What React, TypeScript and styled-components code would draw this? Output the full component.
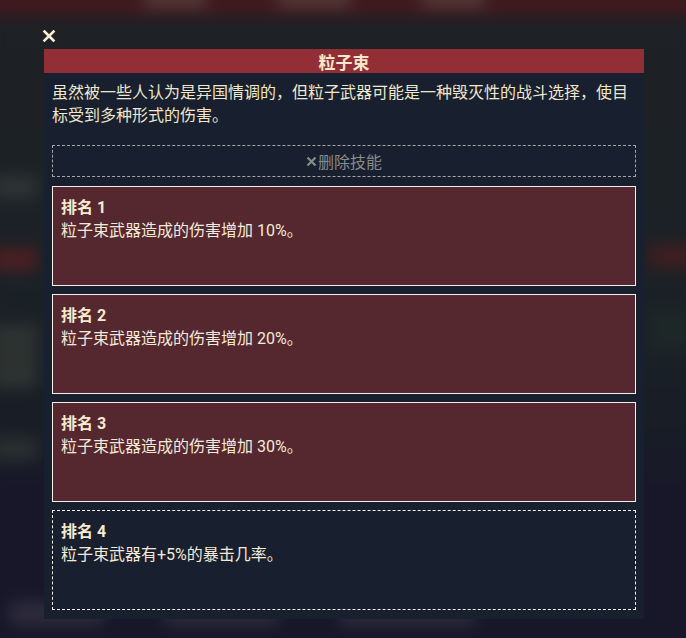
import styled, { createGlobalStyle } from "styled-components";

const GlobalStyle = createGlobalStyle`
  html, body {
    margin: 0;
    padding: 0;
    background: #1c2126;
  }
  body {
    font-family: Roboto, "Noto Sans CJK SC", sans-serif;
  }
`;

interface IRank {
  rank: number;
  text: string;
  unlocked: boolean;
}

const ranks: IRank[] = [
  { rank: 1, text: "粒子束武器造成的伤害增加 10%。", unlocked: true },
  { rank: 2, text: "粒子束武器造成的伤害增加 20%。", unlocked: true },
  { rank: 3, text: "粒子束武器造成的伤害增加 30%。", unlocked: true },
  { rank: 4, text: "粒子束武器有+5%的暴击几率。", unlocked: false },
];

const StyledScreen = styled.div`
  position: relative;
  width: 686px;
  height: 638px;
  overflow: hidden;
`;

// blurred game view sitting behind the dialog
const StyledBackdrop = styled.div`
  height: 100%;
  display: flex;
  flex-direction: column;
  filter: blur(7px);
  transform: scale(1.03);
`;

const StyledTopBar = styled.div`
  height: 30px;
  display: flex;
  gap: 70px;
  padding: 0 150px;
  background: linear-gradient(#43191d 60%, #1e2126);
`;

const StyledTopBlob = styled.div<{ $w: number }>`
  width: ${({ $w }) => $w}px;
  background: #5a3b39;
  margin: 0 0 14px;
`;

const StyledMiddle = styled.div`
  flex: 1;
  display: flex;
  justify-content: space-between;
  background: linear-gradient(#1e2126, #1a2126 70%, #181a27);
`;

const StyledSide = styled.div`
  width: 46px;
  display: flex;
  flex-direction: column;
  padding-top: 120px;
`;

const StyledSideBlob = styled.div<{ $h: number; $mt: number; $c: string }>`
  height: ${({ $h }) => $h}px;
  margin-top: ${({ $mt }) => $mt}px;
  background: ${({ $c }) => $c};
`;

const StyledBottom = styled.div`
  height: 140px;
  display: flex;
  align-items: flex-end;
  gap: 60px;
  padding: 0 20px 22px;
  background: #18172a;
`;

const StyledBottomBlob = styled.div<{ $w: number }>`
  width: ${({ $w }) => $w}px;
  height: 22px;
  background: #2e2c3a;
`;

const StyledOverlay = styled.div`
  position: absolute;
  top: 29px;
  left: 42px;
  width: 602px;
  display: flex;
  flex-direction: column;
`;

const StyledClose = styled.button`
  width: 14px;
  height: 14px;
  padding: 0;
  margin-bottom: 6px;
  border: none;
  background: none;
  display: flex;
  cursor: pointer;
`;

const StyledPanel = styled.div`
  margin-left: 2px;
  width: 600px;
  height: 570px;
  background: #181f2e;
  box-sizing: border-box;
  padding-bottom: 9px;
  display: flex;
  flex-direction: column;
`;

const StyledHeader = styled.div`
  height: 24px;
  background: #922e35;
  color: #f7e8cb;
  font-weight: 700;
  font-size: 17px;
  display: flex;
  align-items: center;
  justify-content: center;
`;

const StyledDescription = styled.p`
  margin: 0;
  padding: 8px 8px 18px;
  color: #f1e7cd;
  font-size: 16px;
  line-height: 23px;
`;

const StyledRemove = styled.button`
  margin: 0 8px;
  height: 34px;
  border: 1px dashed #a6a6a6;
  background: none;
  color: #8a8a8a;
  font-family: inherit;
  font-size: 16px;
  display: flex;
  align-items: center;
  justify-content: center;
  gap: 1px;
  cursor: pointer;
`;

const StyledRankList = styled.div`
  margin-top: 9px;
  padding: 0 8px;
  display: flex;
  flex-direction: column;
  gap: 8px;
`;

const StyledRank = styled.div<{ $unlocked: boolean }>`
  height: 100px;
  box-sizing: border-box;
  padding: 9px 8px;
  border: 1px ${({ $unlocked }) => ($unlocked ? "solid" : "dashed")} #f4f0e8;
  background: ${({ $unlocked }) => ($unlocked ? "#55272f" : "#181f2e")};
  color: #f3eada;
  font-size: 16px;
  line-height: 23px;
`;

const StyledRankTitle = styled.div`
  font-weight: 700;
  font-size: 16px;
  color: #f6ead0;
`;

const sideLeft = [
  { h: 22, mt: 30, c: "#2f3333" },
  { h: 22, mt: 48, c: "#4c1f22" },
  { h: 62, mt: 52, c: "#2d3231" },
  { h: 22, mt: 48, c: "#2a3030" },
];

const sideRight = [
  { h: 24, mt: 96, c: "#3e1e20" },
  { h: 40, mt: 40, c: "#1e2727" },
];

const App = () => (
  <StyledScreen>
    <GlobalStyle />
    <StyledBackdrop>
      <StyledTopBar>
        <StyledTopBlob $w={60} />
        <StyledTopBlob $w={70} />
        <StyledTopBlob $w={60} />
      </StyledTopBar>
      <StyledMiddle>
        <StyledSide>
          {sideLeft.map((b, i) => (
            <StyledSideBlob key={i} $h={b.h} $mt={b.mt} $c={b.c} />
          ))}
        </StyledSide>
        <StyledSide>
          {sideRight.map((b, i) => (
            <StyledSideBlob key={i} $h={b.h} $mt={b.mt} $c={b.c} />
          ))}
        </StyledSide>
      </StyledMiddle>
      <StyledBottom>
        <StyledBottomBlob $w={90} />
        <StyledBottomBlob $w={110} />
        <StyledBottomBlob $w={130} />
      </StyledBottom>
    </StyledBackdrop>

    <StyledOverlay>
      <StyledClose aria-label="关闭">
        <svg width="14" height="14" viewBox="0 0 14 14">
          <path
            d="M2.5 2.5 L11.5 11.5 M11.5 2.5 L2.5 11.5"
            stroke="#f7ecd2"
            strokeWidth="2.6"
            strokeLinecap="square"
          />
        </svg>
      </StyledClose>
      <StyledPanel>
        <StyledHeader>粒子束</StyledHeader>
        <StyledDescription>
          虽然被一些人认为是异国情调的，但粒子武器可能是一种毁灭性的战斗选择，使目标受到多种形式的伤害。
        </StyledDescription>
        <StyledRemove>
          <svg width="11" height="11" viewBox="0 0 11 11">
            <path
              d="M1.5 1.5 L9.5 9.5 M9.5 1.5 L1.5 9.5"
              stroke="#8a8a8a"
              strokeWidth="2.2"
            />
          </svg>
          删除技能
        </StyledRemove>
        <StyledRankList>
          {ranks.map((item) => (
            <StyledRank key={item.rank} $unlocked={item.unlocked}>
              <StyledRankTitle>排名 {item.rank}</StyledRankTitle>
              {item.text}
            </StyledRank>
          ))}
        </StyledRankList>
      </StyledPanel>
    </StyledOverlay>
  </StyledScreen>
);

export default App;
